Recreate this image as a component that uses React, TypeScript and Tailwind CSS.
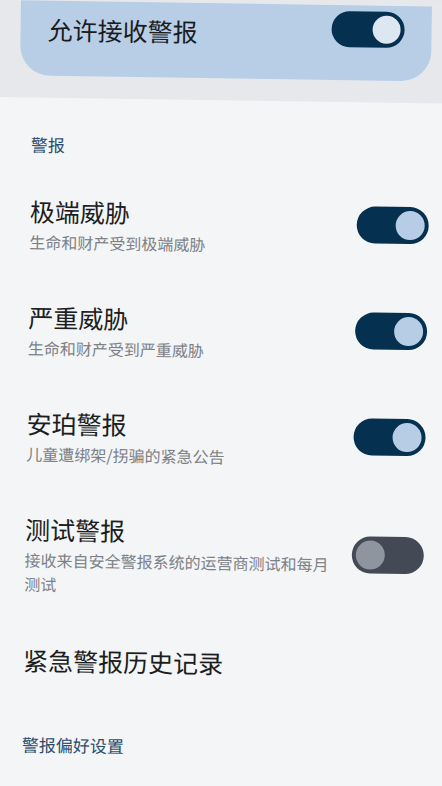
import React from "react";

const font = { fontFamily: '"Noto Sans CJK SC", "Noto Sans", sans-serif' };

function Toggle({ on }: { on: boolean }) {
  if (on) {
    return (
      <div className="w-[72px] h-[37px] shrink-0 rounded-full bg-[#06304f] flex items-center justify-end pr-[4px]">
        <div className="w-[29px] h-[29px] rounded-full bg-[#b6cde5]" />
      </div>
    );
  }
  return (
    <div className="w-[72px] h-[37px] shrink-0 rounded-full bg-[#434a55] flex items-center justify-start pl-[4px]">
      <div className="w-[29px] h-[29px] rounded-full bg-[#8e959f]" />
    </div>
  );
}

function Row({ title, sub, on }: { title: string; sub: string; on: boolean }) {
  return (
    <div className="flex items-center py-[19px]">
      <div className="flex-1 min-w-0 pt-[9px]">
        <div className="text-[25px] leading-[32px] text-[#1c1d1f]">{title}</div>
        <div className="text-[16px] leading-[24px] mt-[3px] text-[#7d8187]">{sub}</div>
      </div>
      <div className="ml-4">
        <Toggle on={on} />
      </div>
    </div>
  );
}

export default function App() {
  return (
    <div className="w-[442px] h-[786px] overflow-hidden bg-[#e6e8eb]" style={font}>
      <div className="w-[480px] h-[840px] origin-top-left rotate-[0.85deg] bg-[#f3f5f6]">
        <div className="w-full h-[97px] bg-[#e6e8eb]">
          <div className="w-[442px] pl-[21px] pr-[10px]">
            <div className="h-[75px] rounded-b-[30px] bg-[#b8cee6] flex items-start pt-[6px] pl-[27px] pr-[27px]">
              <div className="flex-1 mt-[6px] text-[25px] leading-[32px] text-[#1b1c1e]">允许接收警报</div>
              <div className="w-[73px] h-[36px] shrink-0 rounded-full bg-[#06304f] flex items-center justify-end pr-[4px]">
                <div className="w-[28px] h-[28px] rounded-full bg-[#dde7f1]" />
              </div>
            </div>
          </div>
        </div>
        <div className="w-[442px] pl-[33px] pr-[10px] pt-[35px]">
          <div className="text-[17px] leading-[24px] font-normal text-[#2b4d6d]">警报</div>
          <div className="mt-[10px]">
            <Row title="极端威胁" sub="生命和财产受到极端威胁" on />
            <Row title="严重威胁" sub="生命和财产受到严重威胁" on />
            <Row title="安珀警报" sub="儿童遭绑架/拐骗的紧急公告" on />
            <Row title="测试警报" sub="接收来自安全警报系统的运营商测试和每月测试" on={false} />
          </div>
          <div className="mt-[29px] text-[25px] leading-[32px] text-[#1c1d1f]">紧急警报历史记录</div>
          <div className="mt-[57px] text-[17px] leading-[24px] font-normal text-[#2b4d6d]">警报偏好设置</div>
        </div>
      </div>
    </div>
  );
}
